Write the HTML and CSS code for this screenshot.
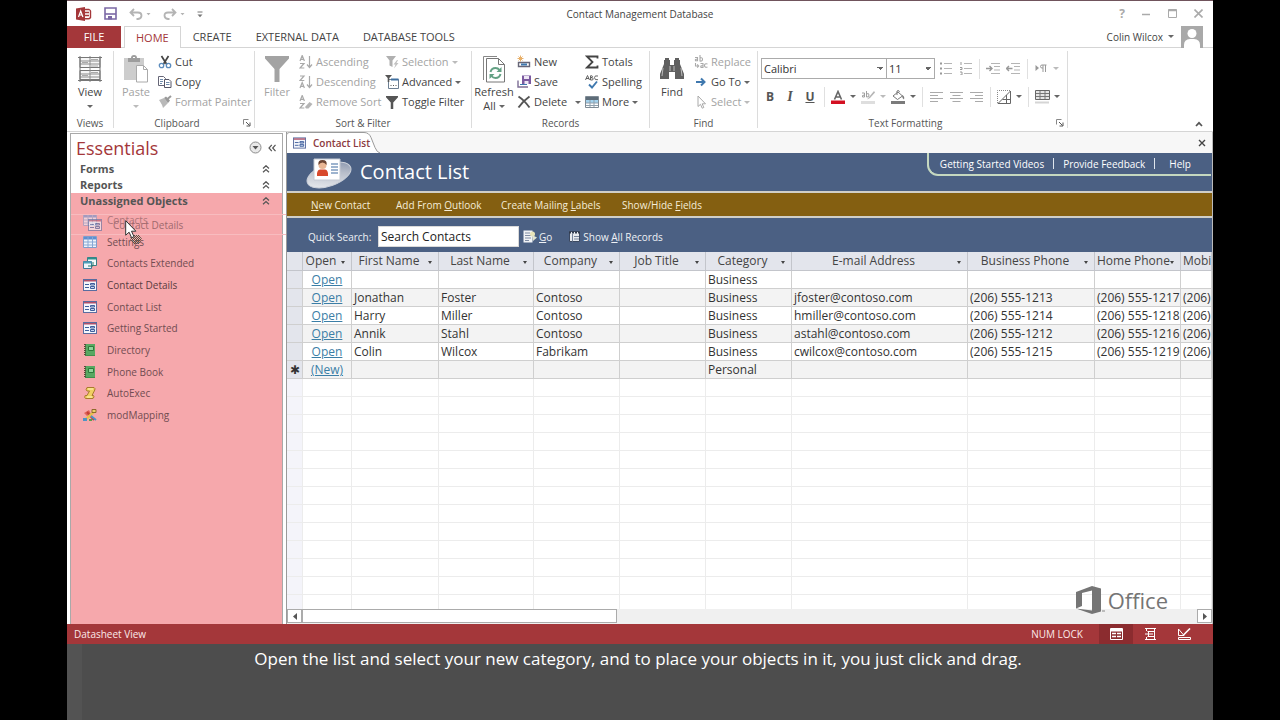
FILE: index.html
```html
<!DOCTYPE html>
<html lang="en">
<head>
<meta charset="utf-8">
<title>Contact Management Database</title>
<link rel="stylesheet" href="styles.css">
</head>
<body>
<svg class="defs" aria-hidden="true">
  <symbol id="i-form" viewBox="0 0 14 12"><rect x=".5" y=".5" width="13" height="11" fill="#f4f6fb" stroke="#5a6da0"/><path d="M1 1h12v1.5H1z" fill="#b0506a"/><path d="M2 5.500h4M2 8.500h4" stroke="#3f5f9d"/><path d="M7.500 4.500h4v1.500h-4zM7.500 7.500h4v2h-4z" fill="#c7d6ee" stroke="#3f5f9d"/></symbol>
  <symbol id="i-table" viewBox="0 0 14 12"><path d="M.5.5h13v11H.5z" fill="#eef4fb" stroke="#7f9dcb"/><path d="M1 1h12v2.500H1z" fill="#5f8fd0"/><path d="M1 6h12M1 9h12M5 1v10M9.500 1v10" stroke="#87a8d5"/></symbol>
  <symbol id="i-query" viewBox="0 0 14 14"><path d="M4.500 1.500h9v8h-9z" fill="#f6fafa" stroke="#3c7d83"/><path d="M4.500 1.500h9v2h-9z" fill="#2f8f8c"/><path d="M.5 5.500h8v7h-8z" fill="#eef6fb" stroke="#40799b"/><path d="M.5 5.500h8v2h-8z" fill="#4f9fb8"/><path d="M5 10h5V6" fill="none" stroke="#2b7c6c"/></symbol>
  <symbol id="i-report" viewBox="0 0 14 14"><path d="M2 1h10v12H2z" fill="#3f8f4b"/><path d="M3 1h9v11H3z" fill="#58a862"/><path d="M5.500 3.500h5v4h-5z" fill="#8fd39a" stroke="#2f7a3b"/><path d="M2 1v12" stroke="#5b4a3a" stroke-width="2" stroke-dasharray="1 1"/></symbol>
  <symbol id="i-macro" viewBox="0 0 14 14"><path d="M4 1.500h7q1.500.8.8 2.500L9 9.500h1.500q1.300 1.300-.5 3H2.500q-1.500-1-.3-3H4L6.500 5H4Q2.300 4 4 1.500z" fill="#f1cf62" stroke="#a87a2e"/><path d="M5 3h5M4 11h5" stroke="#fff3b8"/></symbol>
  <symbol id="i-module" viewBox="0 0 14 14"><path d="M1 5l5-3 2 4-4 2z" fill="#e0655a"/><path d="M4 4l7 8" stroke="#c43f36" stroke-width="2"/><path d="M12 3L3 11" stroke="#e6c04c" stroke-width="2.500"/><path d="M8 8l5 4" stroke="#4f93c4" stroke-width="2"/><path d="M0 10h4v3H0z" fill="#4f93c4"/><path d="M9 1.500h4v3H9z" fill="#edd06a" stroke="#8f6a2b"/><path d="M6 11h3v2H6z" fill="#5aa04b"/></symbol>
  <symbol id="i-up2" viewBox="0 0 8 8"><path d="M1 3.500l3-2.800 3 2.800M1 7.300l3-2.800 3 2.800" fill="none" stroke="#555" stroke-width="1.200"/></symbol>
  <symbol id="i-launch" viewBox="0 0 8 8"><path d="M.5 5.500v-5h5" fill="none" stroke="#888"/><path d="M3 3l3.500 3.500M7 3.500V7H3.500" fill="none" stroke="#555"/></symbol>
  <symbol id="i-funnel" viewBox="0 0 24 26"><path d="M0 0h24v2.500L14.500 13v13h-5V13L0 2.500z" fill="currentColor"/></symbol>
</svg>
<div class="app">
  <header class="titlebar">
    <div class="quick">
      <svg width="16" height="14" viewBox="0 0 16 14"><path d="M0 1.500L9 0v14l-9-1.500z" fill="#a4373a"/><path d="M2.500 10L4.700 4l2.200 6M3.300 8h2.800" fill="none" stroke="#fff" stroke-width="1.200"/><path d="M9 2.500h4q1.500.8 1.500 1.500v6.500q-1 1.300-2 1.300H9M9 5.500h4M9 8.500h4" fill="none" stroke="#a4373a" stroke-width="1.400"/></svg>
      <button class="plain" aria-label="Save"><svg width="13" height="13" viewBox="0 0 13 13"><path d="M1 1h11v11H1z" fill="#fff" stroke="#7b68a5" stroke-width="1.600"/><path d="M1 7h11" stroke="#7b68a5" stroke-width="1.600"/><path d="M4 9h4v3.500H4z" fill="#7b68a5"/></svg></button>
      <button class="plain" aria-label="Undo"><svg width="22" height="12" viewBox="0 0 22 12"><path d="M5 1L1.500 4.500 5 8M1.800 4.500H9q3.500 0 3.500 3T9 11H7.500" fill="none" stroke="#b4b4b4" stroke-width="1.800"/><path d="M17.500 5h4l-2 2.200z" fill="#b4b4b4"/></svg></button>
      <button class="plain" aria-label="Redo"><svg width="22" height="12" viewBox="0 0 22 12"><path d="M9 1l3.500 3.500L9 8M12.200 4.500H5q-3.500 0-3.500 3T5 11h1.500" fill="none" stroke="#b4b4b4" stroke-width="1.800"/><path d="M17.500 5h4l-2 2.200z" fill="#b4b4b4"/></svg></button>
      <button class="plain" aria-label="Customize"><svg width="6" height="8" viewBox="0 0 6 8"><path d="M.5 2h5" stroke="#777"/><path d="M.5 4.500h5L3 7.300z" fill="#777"/></svg></button>
    </div>
    <h1 class="app-title">Contact Management Database</h1>
    <div class="win">
      <button class="plain help" aria-label="Help">?</button>
      <button class="plain" aria-label="Minimize"><svg width="9" height="9" viewBox="0 0 9 9"><path d="M0 5.500h8" stroke="#aaa" stroke-width="1.500"/></svg></button>
      <button class="plain" aria-label="Maximize"><svg width="9" height="9" viewBox="0 0 9 9"><path d="M.5.5h8v8h-8z" fill="none" stroke="#aaa"/><path d="M0 1.500h9" stroke="#aaa" stroke-width="1.500"/></svg></button>
      <button class="plain" aria-label="Close window"><svg width="9" height="9" viewBox="0 0 9 9"><path d="M.5.5l8 8M8.500.5l-8 8" stroke="#aaa" stroke-width="1.600"/></svg></button>
    </div>
  </header>
  <nav class="tabs">
    <button class="tab file">FILE</button>
    <button class="tab on">HOME</button>
    <button class="tab">CREATE</button>
    <button class="tab">EXTERNAL DATA</button>
    <button class="tab">DATABASE TOOLS</button>
    <button class="account">Colin Wilcox <i class="caret"></i>
      <svg width="22" height="22" viewBox="0 0 22 22"><path d="M0 0h22v22H0z" fill="#a9a9a9"/><circle cx="11" cy="7.500" r="4.500" fill="#fff"/><path d="M3 22v-3q0-5.500 6-6h4q6 .5 6 6v3z" fill="#fff"/></svg></button>
  </nav>

  <section class="ribbon" aria-label="Home">
    <div class="group g-views">
      <div class="tools">
        <button class="big"><svg width="24" height="26" viewBox="0 0 24 26"><path d="M2 1.500h20v10H2zM2 14.500h20v9H2z" fill="#f6f6f6" stroke="#777"/><path d="M2 5h20M2 8h20M2 18h20M2 21h20M12 0v26" stroke="#8c8c8c"/><path d="M13 3.500h7M13 10h7M13 16.500h7M4 6.500h6M4 19.500h6" stroke="#aaa"/><path d="M2 0v26M22 0v26M0 1.500h24M0 24.500h24" stroke="#777"/></svg><span>View</span><i class="caret"></i></button>
      </div>
      <div class="label"><span>Views</span></div>
    </div>
    <div class="group g-clip">
      <div class="tools">
        <button class="big off"><svg width="26" height="28" viewBox="0 0 26 28"><path d="M1 3h20v22H1z" fill="#cdcdcd"/><path d="M5 3h3q0-3 3-3t3 3h3v4H5z" fill="#9d9d9d"/><path d="M10 2.500h2" stroke="#fff"/><path d="M13.500 10.500h7l4 4v12.500h-11z" fill="#fff" stroke="#aaa"/><path d="M20.500 10.500v4h4" fill="none" stroke="#aaa"/></svg><span>Paste</span><i class="caret"></i></button>
        <div class="col">
          <button class="small"><svg width="14" height="14" viewBox="0 0 14 14"><path d="M3.500 1l5 8M10.500 1l-5 8" stroke="#444" stroke-width="1.700"/><circle cx="3.500" cy="10.500" r="2.200" fill="none" stroke="#5b8cbd" stroke-width="1.300"/><circle cx="10.500" cy="10.500" r="2.200" fill="none" stroke="#5b8cbd" stroke-width="1.300"/></svg>Cut</button>
          <button class="small"><svg width="14" height="14" viewBox="0 0 14 14"><path d="M.5 1.500h5l2 2v7h-7z" fill="#fff" stroke="#667"/><path d="M2 4.500h3M2 6.500h3M2 8.500h2" stroke="#6f8bab"/><path d="M6.500 4.500h4.500l2 2V12.500H6.500z" fill="#fff" stroke="#556"/><path d="M8 7.500h3.500M8 9.500h3.500" stroke="#6f8bab"/></svg>Copy</button>
          <button class="small off"><svg width="14" height="14" viewBox="0 0 14 14"><path d="M1 5l5-2 4 5-5 5q-.5-3-4-8z" fill="#b9b9b9"/><path d="M6 3l2-1.500 4 4L10 8z" fill="#999"/><path d="M9.500 4L13 1" stroke="#999" stroke-width="2"/></svg>Format Painter</button>
        </div>
      </div>
      <div class="label"><span>Clipboard</span><button class="plain" aria-label="Clipboard options"><svg width="8" height="8"><use href="#i-launch"/></svg></button></div>
    </div>
    <div class="group g-sort">
      <div class="tools">
        <button class="big off"><svg width="24" height="26"><use href="#i-funnel"/></svg><span>Filter</span></button>
        <div class="col w-sort">
          <button class="small off"><svg width="14" height="14" viewBox="0 0 14 14"><path d="M1 6l2.200-5.500L5.400 6M2 4.300h2.600M1 8.500h4L1 13h4.300M10.500 1v11M8 9.500l2.500 3 2.500-3" fill="none" stroke="#a9a9a9" stroke-width="1.200"/></svg>Ascending</button>
          <button class="small off"><svg width="14" height="14" viewBox="0 0 14 14"><path d="M1 1h4L1 5.500h4.300M1 13l2.200-5.500L5.400 13M2 11.300h2.600M10.500 1v11M8 9.500l2.500 3 2.500-3" fill="none" stroke="#a9a9a9" stroke-width="1.200"/></svg>Descending</button>
          <button class="small off"><svg width="14" height="14" viewBox="0 0 14 14"><path d="M1 6l2.200-5.500L5.400 6M2 4.300h2.600M1 8.500h4L1 13h4.300" fill="none" stroke="#a9a9a9" stroke-width="1.200"/><path d="M6 12l4.500-5 3 2-4 4.500H7z" fill="#b5b5b5"/></svg>Remove Sort</button>
        </div>
        <div class="col">
          <button class="small off"><svg width="14" height="14" viewBox="0 0 14 14"><path d="M1 1h10L7.500 5.500V12l-3-1.500v-5z" fill="#b0b0b0"/><path d="M12 5L8.500 9.500h2L9 13.500 13.500 8h-2L13 5z" fill="#c2c2c2"/></svg>Selection <i class="caret"></i></button>
          <button class="small"><svg width="14" height="14" viewBox="0 0 14 14"><path d="M3.500 4.500h10v9h-10z" fill="#fff" stroke="#6d7f92"/><path d="M6 4.500h7.500" stroke="#3f6f9f" stroke-width="2"/><path d="M0 0h7L4.300 3v4H2.700V3z" fill="#555"/><path d="M5.500 10.500h6" stroke="#555" stroke-dasharray="1 1.500"/></svg>Advanced <i class="caret"></i></button>
          <button class="small"><svg width="14" height="13" viewBox="0 0 24 26"><use href="#i-funnel" color="#555"/></svg>Toggle Filter</button>
        </div>
      </div>
      <div class="label"><span>Sort &amp; Filter</span></div>
    </div>
    <div class="group g-rec">
      <div class="tools">
        <button class="big"><svg width="24" height="28" viewBox="0 0 24 28"><path d="M1.500 25V1.500H15" fill="none" stroke="#888"/><path d="M4.500 3.500h12l6 6v17.500h-18z" fill="#fff" stroke="#777"/><path d="M16.500 3.500v6h6" fill="none" stroke="#777"/><path d="M8.500 17q1-4 5-4 2.500 0 4 2M18.500 19q-1 4-5 4-2.500 0-4-2" fill="none" stroke="#63a184" stroke-width="2"/><path d="M19.500 12v5h-5zM7.500 24v-5h5z" fill="#63a184"/></svg><span>Refresh</span><span>All <i class="caret"></i></span></button>
        <div class="col w-rec">
          <button class="small"><svg width="14" height="14" viewBox="0 0 14 14"><path d="M1.500 7.500h11v4h-11z" fill="#fff" stroke="#667" stroke-width="1.400"/><path d="M4 9.500h6" stroke="#3f78ae" stroke-width="2"/><path d="M3.500.5v6M.5 3.500h6M1.500 1.500l4 4M5.500 1.500l-4 4" stroke="#e8b06a"/></svg>New</button>
          <button class="small"><svg width="14" height="14" viewBox="0 0 14 14"><path d="M5 .5h9v8.500H5z" fill="#7b5aa0"/><path d="M7 1h5v3H7zM7.500 6h4v3h-4z" fill="#eee7f5"/><path d="M1 5.500v6.500h10" fill="none" stroke="#7d6d95" stroke-width="1.400"/><path d="M3 9.500h7" stroke="#3f78ae"/></svg>Save</button>
          <button class="small"><svg width="14" height="14" viewBox="0 0 14 14"><path d="M1.500 1.500Q7 5 12.500 12.500M12.500 1.500Q6 6 1.500 12.500" fill="none" stroke="#555" stroke-width="1.900"/></svg>Delete <i class="caret far"></i></button>
        </div>
        <div class="col">
          <button class="small"><svg width="14" height="14" viewBox="0 0 14 14"><path d="M12.500 3.500V1.500H2L7.500 7 2 12.500h10.500v-2" fill="none" stroke="#444" stroke-width="1.800"/></svg>Totals</button>
          <button class="small"><svg width="14" height="14" viewBox="0 0 14 14"><path d="M.5 5L2.500.5l2 4.500M1 3.500h3M5.500.5v4.500h1.500q1.500-.2 1.200-1.200T6 2.600q1.800 0 1.600-1T6 .8M13 1q-3.500-1-3.500 1.700T13 4.700" fill="none" stroke="#555" stroke-width=".9"/><path d="M4 9.500l3 3L12 6.500" fill="none" stroke="#3f78ae" stroke-width="1.900"/></svg>Spelling</button>
          <button class="small"><svg width="14" height="14" viewBox="0 0 14 14"><path d="M.5 1.500h13v11H.5z" fill="#fff" stroke="#7f8b95"/><path d="M1 2h12v3H1z" fill="#5d6c78"/><path d="M1 5h12v3H1z" fill="#a3d2ee"/><path d="M1 8h12M1 10.500h12M5 5v7M9 5v7" stroke="#8fa0ad"/></svg>More <i class="caret"></i></button>
        </div>
      </div>
      <div class="label"><span>Records</span></div>
    </div>
    <div class="group g-find">
      <div class="tools">
        <button class="big"><svg width="24" height="26" viewBox="0 0 24 26"><path d="M4 4h6v5h4V4h6v4l4 10v5h-9v-7H9v7H0v-5L4 8z" fill="#606060"/><path d="M5 3h4M15 3h4" stroke="#606060" stroke-width="2"/><path d="M10 10v5M14 10v5M3 12l-1 8M21 12l1 8" stroke="#bbb"/></svg><span>Find</span></button>
        <div class="col">
          <button class="small off"><svg width="14" height="14" viewBox="0 0 14 14"><path d="M1 2.500h2.500v3.300H1.500Q.7 4 3.500 4M6 0v6q2.500.5 2.500-1.700T6 3M6.500 8.500H9v4H7q-1-2 2-2M13.500 9q-3-.8-3 1.500t3 1.500M1.500 8v3h3M3.200 9.300l1.500 1.700-1.500 1.700" fill="none" stroke="#a9a9a9" stroke-width="1.100"/></svg>Replace</button>
          <button class="small"><svg width="14" height="14" viewBox="0 0 14 14"><path d="M2 7h8M7 3.500L10.500 7 7 10.500" fill="none" stroke="#3f78ae" stroke-width="2"/></svg>Go To <i class="caret"></i></button>
          <button class="small off"><svg width="14" height="14" viewBox="0 0 14 14"><path d="M4 1v10.500l2.500-2.200 1.700 3.900 1.600-.7-1.600-3.700h3.300z" fill="#fff" stroke="#a9a9a9"/></svg>Select <i class="caret"></i></button>
        </div>
      </div>
      <div class="label"><span>Find</span></div>
    </div>
    <div class="group g-text">
      <div class="format">
        <div class="frow">
          <select class="combo font" aria-label="Font"><option>Calibri</option></select>
          <select class="combo size" aria-label="Font size"><option>11</option></select>
          <button class="ib" aria-label="Bullets"><svg width="13" height="13" viewBox="0 0 13 13"><path d="M5 1.500h8M5 6.500h8M5 11.500h8" stroke="#b5b5b5"/><path d="M1 1.500h2M1 6.500h2M1 11.500h2" stroke="#999" stroke-width="2"/></svg></button>
          <button class="ib" aria-label="Numbering"><svg width="13" height="13" viewBox="0 0 13 13"><path d="M5 1.500h8M5 6.500h8M5 11.500h8" stroke="#b5b5b5"/><path d="M2 0v3M1 5.500h2v2H1M1 10h2v3H1" fill="none" stroke="#999"/></svg></button>
          <i class="bar"></i>
          <button class="ib" aria-label="Increase indent"><svg width="14" height="11" viewBox="0 0 14 11"><path d="M5 .5h9M8 3.500h6M8 7h6M5 10.500h9" stroke="#b5b5b5"/><path d="M0 5.500h6M3.500 3L6 5.500 3.500 8" fill="none" stroke="#999" stroke-width="1.400"/></svg></button>
          <button class="ib" aria-label="Decrease indent"><svg width="14" height="11" viewBox="0 0 14 11"><path d="M5 .5h9M8 3.500h6M8 7h6M5 10.500h9" stroke="#b5b5b5"/><path d="M6.500 5.500h-6M3 3L.5 5.500 3 8" fill="none" stroke="#999" stroke-width="1.400"/></svg></button>
          <i class="bar"></i>
          <button class="ib" aria-label="Text direction"><svg width="12" height="9" viewBox="0 0 12 9"><path d="M.5 1v6L4 4z" fill="#999"/><path d="M11.500 1H7q-1.500 0-1.500 1.500T7 4h1M8 1v7M10.500 1v7" fill="none" stroke="#999"/></svg></button>
          <i class="caret soft"></i>
        </div>
        <div class="frow">
          <button class="ib b" aria-label="Bold">B</button>
          <button class="ib i" aria-label="Italic">I</button>
          <button class="ib u" aria-label="Underline">U</button>
          <i class="bar"></i>
          <button class="ib" aria-label="Font color"><svg width="14" height="14" viewBox="0 0 14 14"><path d="M3.500 9.500L7 1.500l3.500 8M4.700 7h4.600" fill="none" stroke="#666" stroke-width="1.600"/><path d="M0 10.500h14V14H0z" fill="#d31022"/></svg></button>
          <i class="caret"></i>
          <button class="ib" aria-label="Highlight"><svg width="14" height="14" viewBox="0 0 14 14"><path d="M1 3h2.500v4H1.500Q.5 5 3.500 5M5.500 1v6Q8 7.500 8 5T5.500 4" fill="none" stroke="#a0a0a0"/><path d="M13 1L8 7l-2 2.500L9 8l5-5.500z" fill="#b5b5b5"/><path d="M0 11h14v3H0z" fill="#dedede"/></svg></button>
          <i class="caret soft"></i>
          <button class="ib" aria-label="Fill color"><svg width="15" height="14" viewBox="0 0 15 14"><path d="M2 6l5-4 4.500 4-5 3.500z" fill="#fff" stroke="#777"/><path d="M6 5V1q2-1.500 2.500 1" fill="none" stroke="#777"/><path d="M11 5q3 1 2 4.500Q11 8 11 5z" fill="#777"/><path d="M0 11h14v3H0z" fill="#7b7b7b"/></svg></button>
          <i class="caret"></i>
          <i class="bar"></i>
          <button class="ib" aria-label="Align left"><svg width="13" height="10" viewBox="0 0 13 10"><path d="M0 .5h13M0 3.500h8M0 6.500h13M0 9.500h8" stroke="#aaa"/></svg></button>
          <button class="ib" aria-label="Center"><svg width="13" height="10" viewBox="0 0 13 10"><path d="M0 .5h13M2.500 3.500h8M0 6.500h13M2.500 9.500h8" stroke="#aaa"/></svg></button>
          <button class="ib" aria-label="Align right"><svg width="13" height="10" viewBox="0 0 13 10"><path d="M0 .5h13M5 3.500h8M0 6.500h13M5 9.500h8" stroke="#aaa"/></svg></button>
          <i class="bar"></i>
          <button class="ib" aria-label="Gridlines"><svg width="14" height="14" viewBox="0 0 14 14"><path d="M.5 13V.5H13" fill="none" stroke="#888" stroke-dasharray="1 1"/><path d="M1 13.500L13.500 1v12.500zM9.500 5v8.500M5.500 9.500h8" fill="none" stroke="#666"/></svg></button>
          <i class="caret"></i>
          <i class="bar"></i>
          <button class="ib" aria-label="Alternate row color"><svg width="15" height="14" viewBox="0 0 15 14"><path d="M.5.5h14v9H.5z" fill="#e4e4e4" stroke="#666"/><path d="M1 3.500h13M1 6.500h13M5 1v8M10 1v8" stroke="#777"/><path d="M0 12.500h14" stroke="#d5d5d5" stroke-width="2"/></svg></button>
          <i class="caret"></i>
        </div>
      </div>
      <div class="label"><span>Text Formatting</span><button class="plain" aria-label="Text formatting options"><svg width="8" height="8"><use href="#i-launch"/></svg></button></div>
    </div>
    <button class="plain collapse" aria-label="Collapse ribbon"><svg width="8" height="6" viewBox="0 0 8 6"><path d="M1 5l3-3.200L7 5" fill="none" stroke="#555" stroke-width="1.700"/></svg></button>
  </section>

  <main class="work">
    <aside class="pane">
      <div class="pane-head"><h2>Essentials</h2>
        <button class="plain" aria-label="Choose category"><svg width="13" height="13" viewBox="0 0 13 13"><circle cx="6.500" cy="6.500" r="5.500" fill="#e9e9e9" stroke="#8d8d8d"/><path d="M3.500 5h6l-3 3.500z" fill="#555"/></svg></button>
        <button class="plain" aria-label="Close pane"><svg width="8" height="8" viewBox="0 0 8 8"><path d="M3.800.8L1 4l2.800 3.200M7.500.8L4.700 4l2.800 3.200" fill="none" stroke="#555" stroke-width="1.200"/></svg></button>
      </div>
      <button class="section">Forms<svg width="8" height="8"><use href="#i-up2"/></svg></button>
      <button class="section">Reports<svg width="8" height="8"><use href="#i-up2"/></svg></button>
      <div class="drop">
        <button class="section">Unassigned Objects<svg width="8" height="8"><use href="#i-up2"/></svg></button>
        <ul class="objects">
          <li class="faint"><svg width="14" height="12"><use href="#i-table"/></svg>Contacts</li>
          <li><svg width="14" height="12"><use href="#i-table"/></svg>Settings</li>
          <li><svg width="14" height="14"><use href="#i-query"/></svg>Contacts Extended</li>
          <li class="picked"><svg width="14" height="12"><use href="#i-form"/></svg>Contact Details</li>
          <li><svg width="14" height="12"><use href="#i-form"/></svg>Contact List</li>
          <li><svg width="14" height="12"><use href="#i-form"/></svg>Getting Started</li>
          <li><svg width="14" height="14"><use href="#i-report"/></svg>Directory</li>
          <li><svg width="14" height="14"><use href="#i-report"/></svg>Phone Book</li>
          <li><svg width="14" height="14"><use href="#i-macro"/></svg>AutoExec</li>
          <li><svg width="14" height="14"><use href="#i-module"/></svg>modMapping</li>
        </ul>
        <div class="ghost"><svg width="14" height="12"><use href="#i-form"/></svg>Contact Details</div>
        <svg class="pointer" width="18" height="25" viewBox="0 0 18 25"><defs><pattern id="dots" width="2" height="2" patternUnits="userSpaceOnUse"><path d="M0 0h1v1H0zM1 1h1v1H1z" fill="#554"/></pattern></defs><path d="M6 15h8l3 4-3 5H9l-4-5z" fill="url(#dots)"/><path d="M.7.7v14.500l3.400-3 2.500 5.500 2.400-1-2.500-5.500h4.400z" fill="#fff" stroke="#333"/></svg>
      </div>
    </aside>

    <section class="doc">
      <div class="doc-tabs">
        <div class="doc-tab"><svg class="tab-shape" width="94" height="21" viewBox="0 0 94 21" aria-hidden="true"><path d="M.5 21V3Q.5.500 3.500.5H78q5 0 7 5l4 10q2 5 5 5.500" fill="#fff" stroke="#9a9a9a"/></svg><svg class="tab-icon" width="13" height="12"><use href="#i-form"/></svg><span>Contact List</span></div>
        <button class="plain close" aria-label="Close document"><svg width="8" height="8" viewBox="0 0 8 8"><path d="M1 1l6 6M7 1L1 7" stroke="#444" stroke-width="1.400"/></svg></button>
      </div>
      <div class="hero">
        <svg width="48" height="34" viewBox="0 0 48 34"><defs><linearGradient id="disc" x1="0" x2="1" y1="1" y2="0"><stop offset="0" stop-color="#f4f5f7"/><stop offset=".6" stop-color="#b7bdc9"/><stop offset="1" stop-color="#7c8aa6"/></linearGradient></defs><ellipse cx="24" cy="20" rx="23" ry="11" transform="rotate(-20 24 20)" fill="url(#disc)" stroke="#ccd1da"/><path d="M9 4h26v21H9z" fill="#fff" stroke="#c5cad3"/><circle cx="17.500" cy="10" r="4" fill="#e9b694"/><path d="M13.500 10q-1-5 4-5t4 5q-1.500-2.500-4-2.500T13.500 10z" fill="#6b4433"/><path d="M12 21q-.5-6 3-6.500h5q3.500.5 3 6.500z" fill="#d8492c"/><path d="M26 9h7M26 12h7M26 15h7M26 18h7" stroke="#7f9cc0" stroke-width="1.300"/></svg>
        <h2>Contact List</h2>
        <nav class="help-links"><a href="#">Getting Started Videos</a><i></i><a href="#">Provide Feedback</a><i></i><a class="last" href="#">Help</a></nav>
      </div>
      <nav class="actions"><a href="#"><u>N</u>ew Contact</a><a href="#">Add From <u>O</u>utlook</a><a href="#">Create Mailing <u>L</u>abels</a><a href="#">Show/Hide <u>F</u>ields</a></nav>
      <form class="search">
        <label for="q">Quick Search:</label><input id="q" type="text" value="Search Contacts">
        <a href="#"><svg width="14" height="13" viewBox="0 0 14 13"><path d="M.5.5h9v12h-9z" fill="#f1f3f6"/><path d="M2 3h5M2 5.500h6M2 8h6M2 10.500h4" stroke="#7f8ca3"/><circle cx="9.500" cy="4" r="2.500" fill="#e8e4b8"/><path d="M9 5l5 2.500-4 3.500z" fill="#e2e5d0"/></svg><span><u>G</u>o</span></a>
        <a href="#" class="all"><svg width="11" height="11" viewBox="0 0 11 11"><path d="M.5.500h10v10H.5z" fill="#e6e9ee" stroke="#3b4860"/><path d="M0 1.500h11" stroke="#303a4d" stroke-width="2" stroke-dasharray="2 1"/><path d="M3.500 2.500v8M5 5.500h5M5 8h5" stroke="#77849b"/></svg><span>Show <u>A</u>ll Records</span></a>
      </form>
      <div class="sheet">
        <table>
          <colgroup><col class="c-sel"><col class="c-open"><col class="c-first"><col class="c-last"><col class="c-mid"><col class="c-mid"><col class="c-mid"><col class="c-mail"><col class="c-bus"><col class="c-mid"><col></colgroup>
          <thead><tr><th></th><th>Open</th><th>First Name</th><th>Last Name</th><th>Company</th><th>Job Title</th><th>Category</th><th>E-mail Address</th><th>Business Phone</th><th>Home Phone</th><th>Mobi</th></tr></thead>
          <tbody id="rows"></tbody>
        </table>
      </div>
      <div class="scroll">
        <button class="plain" aria-label="Scroll left"><svg width="4" height="7" viewBox="0 0 4 7"><path d="M4 0v7L0 3.500z" fill="#555"/></svg></button>
        <div class="thumb"></div>
        <button class="plain end" aria-label="Scroll right"><svg width="4" height="7" viewBox="0 0 4 7"><path d="M0 0v7l4-3.500z" fill="#555"/></svg></button>
      </div>
      <div class="brand"><svg width="29" height="30" viewBox="0 0 29 30"><path d="M0 7L16 1l9 2.500v23L16 29 0 23.500 16 25.500V5.500L6 8v13l-6 2.500z" fill="#757575"/><path d="M26 26h3" stroke="#888"/></svg><span>Office</span></div>
    </section>
  </main>

  <footer class="status">
    <span>Datasheet View</span><span class="num">NUM LOCK</span>
    <button class="vb on" aria-label="Datasheet view"><svg width="13" height="12" viewBox="0 0 13 12"><path d="M.5.5h12v11H.5z" fill="none" stroke="#fff"/><path d="M1 2h11" stroke="#fff" stroke-width="3"/><path d="M2 5.500h4M7 5.500h4M2 8.500h4M7 8.500h4" stroke="#fff" stroke-width="1.500"/></svg></button>
    <button class="vb" aria-label="Layout view"><svg width="11" height="12" viewBox="0 0 11 12"><path d="M0 .5h11M0 11.500h11M2.500 3.500h7M2.500 8.500h7M0 6h8M1.500 1v2M9.500 1v10M1.500 9v2M3.500 3.500V6M3.500 6v2.500" fill="none" stroke="#fff"/></svg></button>
    <button class="vb" aria-label="Design view"><svg width="13" height="12" viewBox="0 0 13 12"><path d="M.5 1v6.500H6L.5 1zM.5 9.500h12v2H.5z" fill="none" stroke="#fff"/><path d="M5.500 7L12 .5" stroke="#fff" stroke-width="1.600"/></svg></button>
  </footer>
  <p class="caption">Open the list and select your new category, and to place your objects in it, you just click and drag.</p>
</div>
<script src="script.js"></script>
</body>
</html>
```
FILE: styles.css
```css
* { box-sizing: border-box; }
body { margin: 0; background: #000; color: #444; font: 10px/16px "Open Sans", "Noto Sans", sans-serif; }
h1, h2, p, ul { margin: 0; padding: 0; font-weight: 400; }
ul { list-style: none; }
button, input, select { font: inherit; color: inherit; margin: 0; }
button { background: none; border: 0; padding: 0; white-space: nowrap; }
svg { display: block; flex: none; }
a { color: inherit; text-decoration: none; white-space: nowrap; }
.defs { position: absolute; width: 0; height: 0; }
.app { margin: 0 67px; min-height: 100vh; display: flex; flex-direction: column; background: #fff; }
.plain { display: flex; align-items: center; justify-content: center; }
.caret { display: inline-block; flex: none; border: 3px solid transparent; border-top-color: #666; border-bottom: 0; width: 6px; height: 3px; vertical-align: 2px; }
.off .caret, .caret.soft { border-top-color: #bbb; }

.titlebar { height: 26px; border-top: 1px solid #70545c; display: grid; grid-template-columns: 1fr auto 1fr; align-items: center; }
.quick { display: flex; align-items: center; gap: 12px; padding-left: 9px; }
.app-title { font-size: 10px; line-height: 16px; }
.win { display: flex; justify-content: flex-end; gap: 17px; padding-right: 10px; }
.help { color: #aaa; font-weight: 700; font-size: 12px; }

.tabs { height: 22px; display: flex; border-bottom: 1px solid #d5d5d5; font-size: 11px; }
.tab { padding: 0 12px; height: 22px; }
.tab.file { background: #a4373a; color: #fff; width: 54px; margin-right: 3px; }
.tab.on { color: #a4373a; background: #fff; border: 1px solid #d5d5d5; border-bottom: 0; padding: 0 11px; }
.account { margin-left: auto; display: flex; align-items: center; gap: 5px; padding-right: 10px; font-size: 10px; }
.account svg { margin-left: 2px; }

.ribbon { display: flex; height: 84px; border-bottom: 1px solid #d5d5d5; padding: 3px 0 0; }
.group { border-right: 1px solid #dcdcdc; display: flex; flex-direction: column; flex: none; margin-bottom: 3px; }
.g-views { width: 47px; }
.g-clip { width: 141px; }
.g-sort { width: 217px; }
.g-rec { width: 178px; }
.g-find { width: 108px; }
.g-text { width: 310px; }
.tools { display: flex; height: 64px; flex: none; }
.label { height: 16px; display: flex; align-items: center; color: #555; }
.label span { flex: 1; text-align: center; }
.label button { width: 14px; }
.big { width: 44px; display: flex; flex-direction: column; align-items: center; padding-top: 4px; line-height: 14px; }
.g-views .big { width: 46px; }
.g-rec .tools { gap: 1px; }
.big svg { height: 28px; margin-bottom: 2px; }
.big > .caret { margin-top: 6px; }
.off { color: #a3a3a3; }
.col { display: flex; flex-direction: column; padding-top: 1px; }
.w-sort { width: 86px; }
.w-rec { width: 67px; }
.small { height: 20px; display: flex; align-items: center; gap: 3px; }
.small, .big { font-size: 11px; }
.far { margin-left: 5px; }
.format { height: 64px; flex: none; padding: 7px 2px 0; display: flex; flex-direction: column; gap: 7px; }
.frow { display: flex; align-items: center; height: 21px; }
.combo { appearance: none; height: 21px; border: 1px solid #ababab; border-radius: 0; padding: 0 2px; color: #333; font-size: 11px; background: #fff conic-gradient(from -60deg at 50% 100%, #666 120deg, #fff 0) no-repeat right 3px center / 6px 3px; background: #fff conic-gradient(from -45deg at 50% 100%, #fff 90deg, #fff 0); }
.combo { background: linear-gradient(45deg, transparent 50%, #666 50%) no-repeat right 6px center / 3px 3px, linear-gradient(-45deg, transparent 50%, #666 50%) no-repeat right 3px center / 3px 3px, #fff; }
.combo.font { width: 126px; margin-left: 1px; }
.combo.size { width: 49px; margin-left: -1px; }
.ib { width: 20px; height: 20px; display: flex; align-items: center; justify-content: center; font-weight: 700; font-size: 12px; color: #555; }
.ib.i { font-family: "Liberation Serif", serif; font-style: italic; font-size: 14px; }
.ib.u { text-decoration: underline; }
.frow .caret { margin: 0 2px; }
.bar { width: 8px; height: 20px; background: linear-gradient(#e0e0e0, #e0e0e0) no-repeat center / 1px 100%; }
.collapse { margin: auto 10px 1px auto; height: 12px; }

.work { flex: 1; display: flex; min-height: 0; background: #fff; }
.pane { width: 213px; flex: none; margin: 1px 3px 0; border: 1px solid #a9a9a9; border-bottom: 0; display: flex; flex-direction: column; }
.pane-head { display: flex; align-items: center; gap: 6px; padding: 0 6px 0 5px; height: 27px; }
.pane-head h2 { flex: 1; font-size: 18px; line-height: 28px; color: #a4373a; }
.section { display: flex; justify-content: space-between; align-items: center; height: 16px; width: 100%; padding: 0 12px 0 9px; font-size: 11px; font-weight: 700; color: #555; }
.drop { flex: 1; background: #f6a8ac; position: relative; color: #714c51; }
.objects { display: grid; grid-template-rows: repeat(10, 1fr); height: 217px; }
.objects li { display: flex; align-items: center; gap: 10px; padding-left: 12px; }
.objects .picked { color: #5b3c40; }
.objects .faint { opacity: .55; }
.ghost { position: absolute; left: 0; right: -4px; top: 21px; height: 21px; padding-left: 17px; display: flex; align-items: center; gap: 11px; border: 1px solid #f8bcbf; border-width: 1px 0; color: #a0686d; }
.ghost svg { opacity: .6; }
.pointer { position: absolute; left: 54px; top: 27px; }

.doc { flex: 1; min-width: 0; display: flex; flex-direction: column; position: relative; border-right: 1px solid #bbb; border-left: 1px solid #9a9a9a; }
.doc-tabs { height: 21px; flex: none; display: flex; justify-content: space-between; background: #f7f7f7; }
.doc-tab { position: relative; width: 94px; display: flex; align-items: center; gap: 7px; padding-left: 6px; color: #8c3a3e; font-weight: 600; white-space: nowrap; }
.doc-tab span, .tab-icon { position: relative; }
.tab-shape { position: absolute; left: -1px; top: 0; }
.close { padding: 0 6px; }
.hero { height: 38px; flex: none; background: #4b6083; color: #fff; display: flex; align-items: center; padding-left: 18px; gap: 7px; }
.hero h2 { font-size: 20px; line-height: 28px; white-space: nowrap; }
.help-links { margin-left: auto; align-self: flex-start; margin-right: 1px; height: 23px; display: flex; align-items: center; gap: 9px; padding: 0 20px 0 11px; border: solid #c5d8c0; border-width: 0 0 2px 2px; border-bottom-left-radius: 11px; }
.help-links i { width: 1px; height: 11px; background: #dfe6ee; }
.help-links .last { margin-left: 5px; }
.actions { height: 27px; flex: none; background: #845f11; border: solid #d0cfc8; border-width: 2px 0; color: #f5ecd8; display: grid; grid-template-columns: 85px 105px 121px auto; align-items: center; padding-left: 24px; }
.search { height: 34px; flex: none; background: #4b6083; color: #eef1f5; display: flex; align-items: center; padding: 3px 0 0 21px; }
.search label { width: 65px; white-space: nowrap; }
.search input { width: 141px; height: 21px; margin: 0 4px 0 5px; padding: 0 2px; border: 1px solid #d9d9d9; background: #fff; color: #222; font-size: 12px; }
.search a { display: flex; align-items: center; gap: 2px; }
.search .all { margin-left: 17px; gap: 3px; }

.sheet { flex: 1 1 0; min-height: 0; overflow: hidden; background: #fff; }
table { width: 100%; table-layout: fixed; border-collapse: separate; border-spacing: 0; font-size: 12px; line-height: 17px; }
th, td { height: 18px; padding: 0 0 0 2px; border: solid #cfcfcf; border-width: 0 1px 1px 0; overflow: hidden; white-space: nowrap; text-align: left; font-weight: 400; }
.c-sel { width: 16px; }
.c-open { width: 49px; }
.c-first { width: 87px; }
.c-last { width: 95px; }
.c-mid { width: 86px; }
.c-mail { width: 176px; }
.c-bus { width: 127px; }
th { height: 19px; line-height: 18px; background: #e3e5ec; border-color: #c3c5cb; text-align: center; padding: 0 12px 0 0; position: relative; }
th:nth-child(n+2):not(:last-child)::after { content: ""; position: absolute; right: 6px; top: 9px; border: 2px solid transparent; border-top: 3px solid #444; border-bottom: 0; }
th:nth-child(10), th:last-child { text-align: left; padding: 0 0 0 2px; }
td { color: #333; }
.alt td { background: #f3f3f3; }
td:first-child, .alt td:first-child { background: #e3e5ec; text-align: center; padding: 0; }
td:nth-child(2) { text-align: center; padding: 0; }
td a { color: #3b7ea6; text-decoration: underline; }
.blank td { border-color: #ececec; }
.blank td:first-child { background: #f4f4fa; }
.brand { position: absolute; right: 44px; bottom: 9px; display: flex; align-items: center; gap: 3px; font-size: 22px; line-height: 30px; color: #757575; }

.scroll { height: 15px; flex: none; display: flex; background: #f0f0f0; }
.scroll .plain, .thumb { border: 1px solid #ababab; background: #fff; height: 14px; }
.scroll .plain { width: 15px; }
.thumb { width: 34%; }
.end { margin-left: auto; }

.status { height: 20px; flex: none; background: #a4373a; color: #fbe9e9; display: flex; align-items: center; padding: 0 12px 0 7px; }
.num { margin-left: auto; margin-right: 16px; }
.vb { width: 34px; height: 20px; display: flex; align-items: center; justify-content: center; }
.vb.on { background: #8b2c2f; }
.caption { height: 76px; flex: none; background: #4d4d4d; border-left: 15px solid #535353; padding-right: 19px; color: #fff; text-align: center; font-size: 17px; line-height: 30px; }
```
FILE: script.js
```js
const rows = [
  ["", "Open", "", "", "", "", "Business", "", "", "", ""],
  ["", "Open", "Jonathan", "Foster", "Contoso", "", "Business", "jfoster@contoso.com", "(206) 555-1213", "(206) 555-1217", "(206)"],
  ["", "Open", "Harry", "Miller", "Contoso", "", "Business", "hmiller@contoso.com", "(206) 555-1214", "(206) 555-1218", "(206)"],
  ["", "Open", "Annik", "Stahl", "Contoso", "", "Business", "astahl@contoso.com", "(206) 555-1212", "(206) 555-1216", "(206)"],
  ["", "Open", "Colin", "Wilcox", "Fabrikam", "", "Business", "cwilcox@contoso.com", "(206) 555-1215", "(206) 555-1219", "(206)"],
  ["✱", "(New)", "", "", "", "", "Personal", "", "", "", ""]
];
const body = document.getElementById("rows");
rows.forEach((row, n) => {
  const tr = body.insertRow();
  if (n % 2 || n === rows.length - 1) tr.className = "alt";
  row.forEach((value, c) => {
    const td = tr.insertCell();
    if (c === 1) {
      const a = document.createElement("a");
      a.href = "#";
      a.textContent = value;
      td.append(a);
    } else td.textContent = value;
  });
});
for (let n = 0; n < 14; n++) {
  const tr = body.insertRow();
  tr.className = "blank";
  for (let c = 0; c < 11; c++) tr.insertCell();
}
```
